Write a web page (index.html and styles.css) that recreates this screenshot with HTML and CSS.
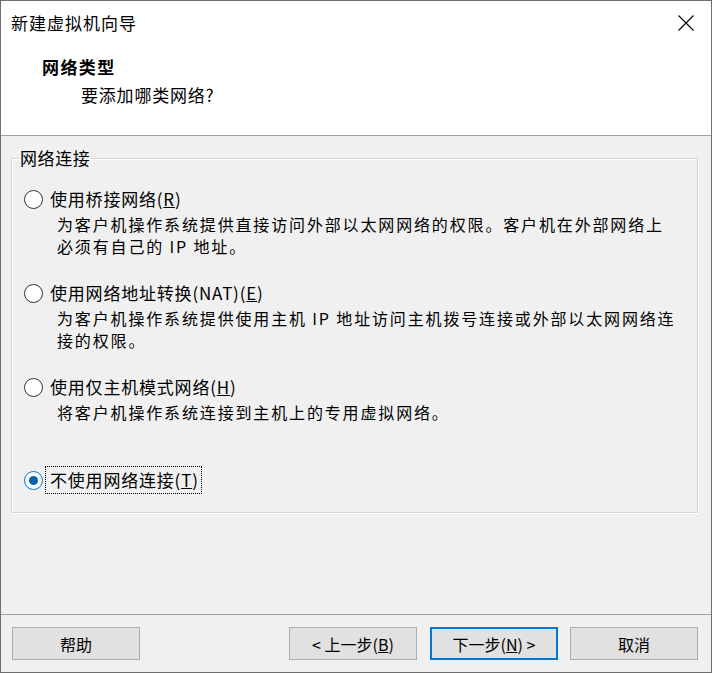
FILE: index.html
```html
<!DOCTYPE html>
<html lang="zh-CN">
<head>
    <meta charset="UTF-8">
    <title>新建虚拟机向导</title>
    <link rel="stylesheet" href="styles.css">
</head>
<body>

<div class="window">
    <div class="titlebar">
        <span class="title">新建虚拟机向导</span>
        <svg class="close" width="16" height="16" viewBox="0 0 16 16">
            <path d="M0.5 0.5 L15.5 15.5 M15.5 0.5 L0.5 15.5" stroke="#000" stroke-width="1.1" fill="none"/>
        </svg>
    </div>

    <div class="header">
        <div class="header-title">网络类型</div>
        <div class="header-sub">要添加哪类网络?</div>
    </div>

    <div class="content">
        <fieldset class="group">
            <legend>网络连接</legend>

            <div class="option">
                <div class="option-row">
                    <span class="radio"></span>
                    <span class="label">使用桥接网络(<u>R</u>)</span>
                </div>
                <div class="desc">为客户机操作系统提供直接访问外部以太网网络的权限。客户机在外部网络上<br>必须有自己的 IP 地址。</div>
            </div>

            <div class="option">
                <div class="option-row">
                    <span class="radio"></span>
                    <span class="label">使用网络地址转换(NAT)(<u>E</u>)</span>
                </div>
                <div class="desc">为客户机操作系统提供使用主机 IP 地址访问主机拨号连接或外部以太网网络连<br>接的权限。</div>
            </div>

            <div class="option">
                <div class="option-row">
                    <span class="radio"></span>
                    <span class="label">使用仅主机模式网络(<u>H</u>)</span>
                </div>
                <div class="desc">将客户机操作系统连接到主机上的专用虚拟网络。</div>
            </div>

            <div class="option option-last">
                <div class="option-row">
                    <span class="radio checked"></span>
                    <span class="label focused">不使用网络连接(<u>T</u>)</span>
                </div>
            </div>
        </fieldset>
    </div>

    <div class="footer">
        <button class="btn">帮助</button>
        <div class="spacer"></div>
        <button class="btn">&lt; 上一步(<u>B</u>)</button>
        <button class="btn btn-default">下一步(<u>N</u>) &gt;</button>
        <button class="btn btn-cancel">取消</button>
    </div>
</div>

</body>
</html>
```

FILE: styles.css
```css
body {
    margin: 0;
    padding: 0;
    font-family: "Noto Sans CJK SC", "Noto Sans", sans-serif;
    color: #000;
}
.window {
    width: 712px;
    height: 673px;
    box-sizing: border-box;
    border: 1px solid #6e6e6e;
    background: #f0f0f0;
    display: flex;
    flex-direction: column;
}
.titlebar {
    height: 43px;
    background: #fff;
    display: flex;
    align-items: center;
    justify-content: space-between;
    padding: 0 17px 0 10px;
}
.title {
    font-size: 17px;
    letter-spacing: 1px;
}
.close {
    display: block;
}
.header {
    background: #fff;
    padding: 11px 0 28px 41px;
    border-bottom: 1px solid #a0a0a0;
}
.header-title {
    font-size: 17px;
    font-weight: bold;
    line-height: 24px;
    letter-spacing: 1.4px;
}
.header-sub {
    font-size: 17px;
    line-height: 24px;
    letter-spacing: 0.8px;
    margin-top: 4px;
    padding-left: 39px;
}
.content {
    flex: 1;
    padding: 10px 13px 0 10px;
}
.group {
    margin: 0;
    padding: 18px 0 21px 0;
    border: 1px solid #d5d5d5;
    box-shadow: 1px 1px 0 #fff, inset 1px 1px 0 #fff;
}
.group legend {
    margin-left: 7px;
    padding: 0 1px;
    font-size: 17px;
    line-height: 24px;
    letter-spacing: 0.6px;
}
.option {
    margin: 0 0 25px 12px;
}
.option-last {
    margin-top: 46px;
    margin-bottom: 0;
}
.option-row {
    display: flex;
    align-items: center;
    height: 22px;
}
.radio {
    width: 17px;
    height: 17px;
    border: 1px solid #333;
    border-radius: 50%;
    background: #fff;
    margin-right: 7px;
    display: flex;
    align-items: center;
    justify-content: center;
}
.radio.checked {
    border-color: #0078d7;
}
.radio.checked::after {
    content: "";
    width: 9px;
    height: 9px;
    border-radius: 50%;
    background: #0063b1;
}
.label {
    font-size: 17px;
    line-height: 22px;
    letter-spacing: 0.8px;
}
.label.focused {
    outline: 1px dotted #000;
    outline-offset: 2px;
    margin-left: -2px;
    padding-left: 2px;
}
.desc {
    font-size: 16px;
    line-height: 22px;
    letter-spacing: 1.85px;
    margin-top: 3px;
    padding-left: 33px;
}
.footer {
    height: 58px;
    border-top: 1px solid #a0a0a0;
    box-sizing: border-box;
    display: flex;
    align-items: flex-start;
    padding: 12px 13px 0 11px;
}
.spacer {
    flex: 1;
}
.btn {
    width: 128px;
    height: 33px;
    background: #e1e1e1;
    border: 1px solid #adadad;
    font-family: "Noto Sans CJK SC", "Noto Sans", sans-serif;
    font-size: 16px;
    color: #000;
    padding: 0;
    margin: 0;
}
.btn-default {
    border: 2px solid #0078d7;
    margin-left: 13px;
}
.btn-cancel {
    margin-left: 12px;
}
```
